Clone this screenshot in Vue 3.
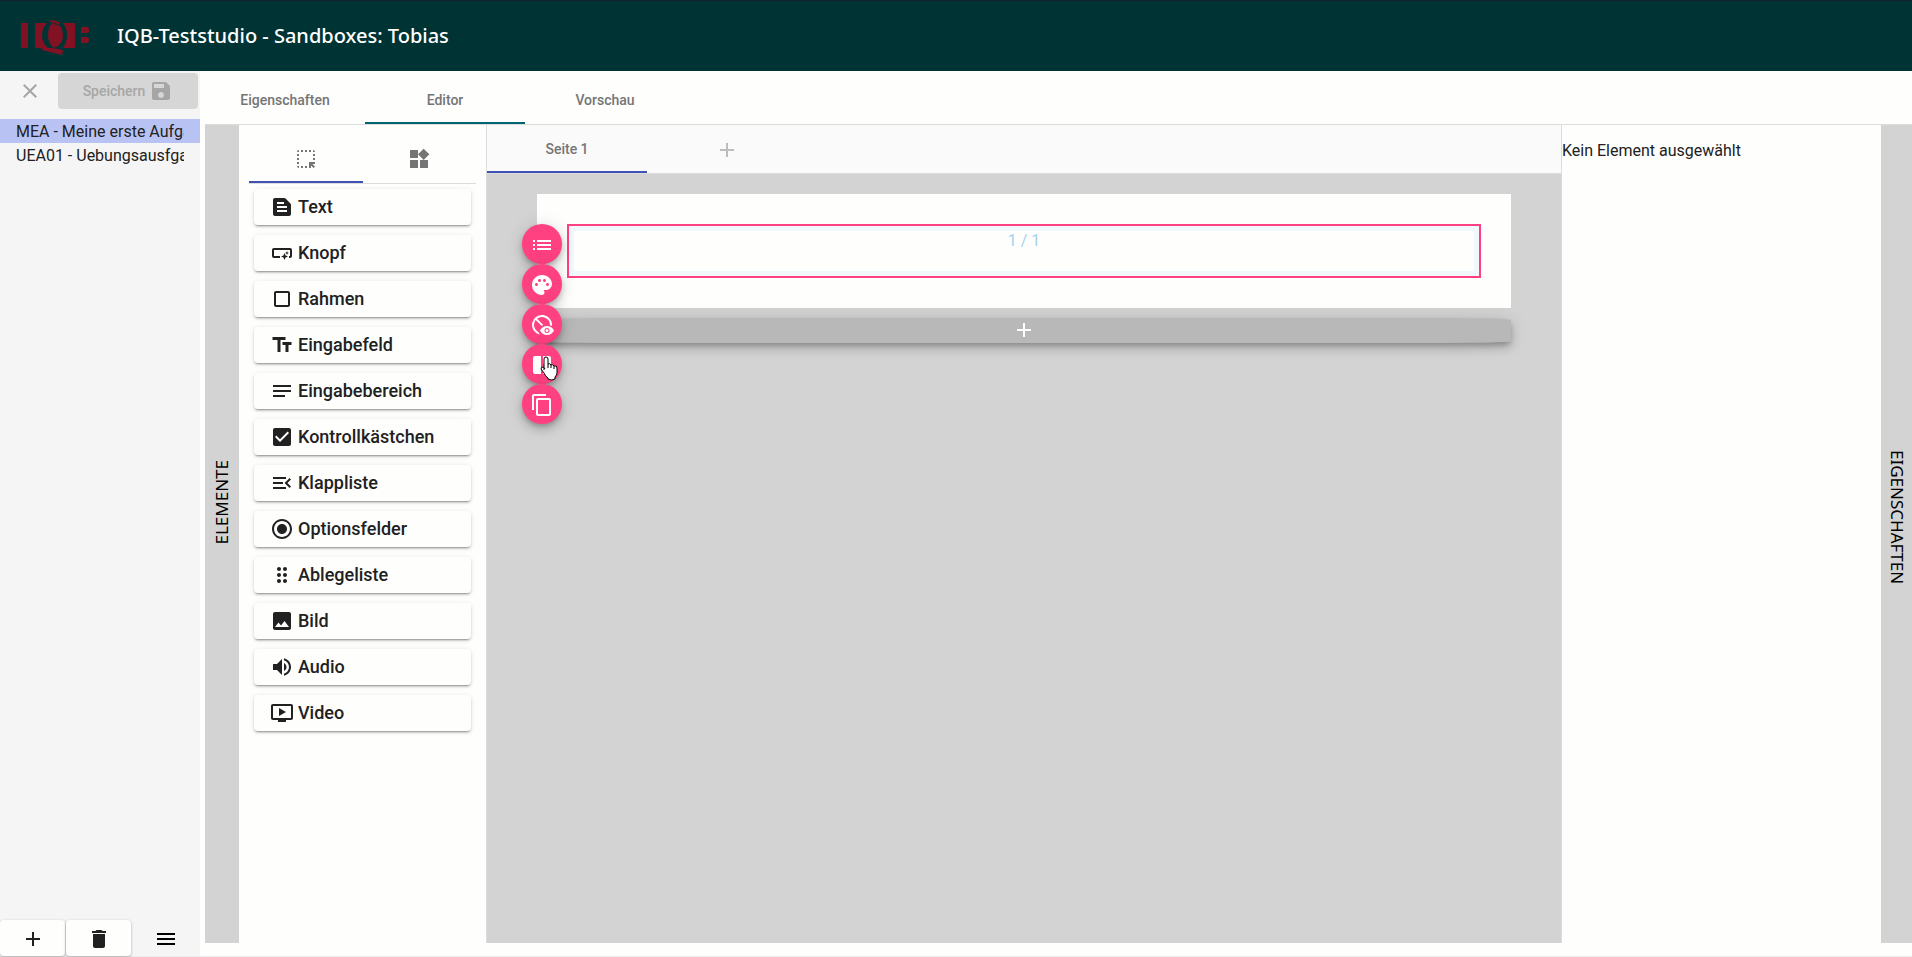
<script setup>
import { ref } from 'vue'

const icons = {
  close: 'M19 6.41L17.59 5 12 10.59 6.41 5 5 6.41 10.59 12 5 17.59 6.41 19 12 13.41 17.59 19 19 17.59 13.41 12z',
  save: 'M17 3H5c-1.11 0-2 .9-2 2v14c0 1.1.89 2 2 2h14c1.1 0 2-.9 2-2V7l-4-4zm-5 16c-1.66 0-3-1.34-3-3s1.34-3 3-3 3 1.34 3 3-1.34 3-3 3zm3-10H5V5h10v4z',
  remove: 'M6 19c0 1.1.9 2 2 2h8c1.1 0 2-.9 2-2V7H6v12zM19 4h-3.5l-1-1h-5l-1 1H5v2h14V4z',
  add: 'M19 13h-6v6h-2v-6H5v-2h6V5h2v6h6v2z',
  menu: 'M3 18h18v-2H3v2zm0-5h18v-2H3v2zm0-7v2h18V6H3z',
  select: 'M17 5h-2V3h2v2zm-2 16h2v-2.59L19.59 21 21 19.59 18.41 17H21v-2h-6v6zm4-12h2V7h-2v2zm0 4h2v-2h-2v2zm-8 8h2v-2h-2v2zM7 5h2V3H7v2zM3 17h2v-2H3v2zm2 4v-2H3c0 1.1.9 2 2 2zM19 3v2h2c0-1.1-.9-2-2-2zm-8 2h2V3h-2v2zM3 9h2V7H3v2zm4 12h2v-2H7v2zm-4-8h2v-2H3v2zm0-8h2V3c-1.1 0-2 .9-2 2z',
  widgets: 'M13 13v8h8v-8h-8zM3 21h8v-8H3v8zM3 3v8h8V3H3zm13.66-1.31L11 7.34 16.66 13l5.66-5.66-5.66-5.65z'
}

const elements = [
  { label: 'Text', d: 'M20.41 8.41l-4.83-4.83C15.21 3.21 14.7 3 14.17 3H5C3.9 3 3 3.9 3 5v14c0 1.1.9 2 2 2h14c1.1 0 2-.9 2-2V9.83C21 9.3 20.79 8.79 20.41 8.41zM7 7h7v2H7V7zM17 17H7v-2h10V17zM17 13H7v-2h10V13z' },
  { label: 'Knopf', d: 'M22 9v6c0 1.1-.9 2-2 2h-1v-2h1V9H4v6h6v2H4c-1.1 0-2-.9-2-2V9c0-1.1.9-2 2-2h16c1.1 0 2 .9 2 2zm-7.5 10l1.09-2.41L18 15.5l-2.41-1.09L14.5 12l-1.09 2.41L11 15.5l2.41 1.09L14.5 19zm2.5-5l.62-1.38L19 12l-1.38-.62L17 10l-.62 1.38L15 12l1.38.62L17 14z' },
  { label: 'Rahmen', d: 'M18 4H6c-1.1 0-2 .9-2 2v12c0 1.1.9 2 2 2h12c1.1 0 2-.9 2-2V6c0-1.1-.9-2-2-2zm0 14H6V6h12v12z' },
  { label: 'Eingabefeld', d: 'M2.5 4v3h5v12h3V7h5V4h-13zm19 5h-9v3h3v7h3v-7h3V9z' },
  { label: 'Eingabebereich', d: 'M3 18h12v-2H3v2zM3 6v2h18V6H3zm0 7h18v-2H3v2z' },
  { label: 'Kontrollkästchen', d: 'M19 3H5c-1.11 0-2 .9-2 2v14c0 1.1.89 2 2 2h14c1.11 0 2-.9 2-2V5c0-1.1-.89-2-2-2zm-9 14l-5-5 1.41-1.41L10 14.17l7.59-7.59L19 8l-9 9z' },
  { label: 'Klappliste', d: 'M3 18h13v-2H3v2zm0-5h10v-2H3v2zm0-7v2h13V6H3zm18 9.59L17.42 12 21 8.41 19.59 7l-5 5 5 5L21 15.59z' },
  { label: 'Optionsfelder', d: 'M12 7c-2.76 0-5 2.24-5 5s2.24 5 5 5 5-2.24 5-5-2.24-5-5-5zm0-5C6.48 2 2 6.48 2 12s4.48 10 10 10 10-4.48 10-10S17.52 2 12 2zm0 18c-4.42 0-8-3.58-8-8s3.58-8 8-8 8 3.58 8 8-3.58 8-8 8z' },
  { label: 'Ablegeliste', d: 'M11 18c0 1.1-.9 2-2 2s-2-.9-2-2 .9-2 2-2 2 .9 2 2zm-2-8c-1.1 0-2 .9-2 2s.9 2 2 2 2-.9 2-2-.9-2-2-2zm0-6c-1.1 0-2 .9-2 2s.9 2 2 2 2-.9 2-2-.9-2-2-2zm6 4c1.1 0 2-.9 2-2s-.9-2-2-2-2 .9-2 2 .9 2 2 2zm0 2c-1.1 0-2 .9-2 2s.9 2 2 2 2-.9 2-2-.9-2-2-2zm0 6c-1.1 0-2 .9-2 2s.9 2 2 2 2-.9 2-2-.9-2-2-2z' },
  { label: 'Bild', d: 'M21 19V5c0-1.1-.9-2-2-2H5c-1.1 0-2 .9-2 2v14c0 1.1.9 2 2 2h14c1.1 0 2-.9 2-2zM8.5 13.5l2.5 3.01L14.5 12l4.5 6H5l3.5-4.5z' },
  { label: 'Audio', d: 'M3 9v6h4l5 5V4L7 9H3zm13.5 3c0-1.77-1.02-3.29-2.5-4.03v8.05c1.48-.73 2.5-2.25 2.5-4.02zM14 3.23v2.06c2.89.86 5 3.54 5 6.71s-2.11 5.85-5 6.71v2.06c4.01-.91 7-4.49 7-8.77s-2.99-7.86-7-8.77z' },
  { label: 'Video', d: 'M21 3H3c-1.11 0-2 .89-2 2v12c0 1.1.89 2 2 2h5v2h8v-2h5c1.1 0 1.99-.9 1.99-2L23 5c0-1.11-.9-2-2-2zm0 14H3V5h18v12zm-5-6l-7 4V7z' }
]

const tools = [
  { label: 'Liste', d: 'M3 13h2v-2H3v2zm0 4h2v-2H3v2zm0-8h2V7H3v2zm4 4h14v-2H7v2zm0 4h14v-2H7v2zM7 7v2h14V7H7z' },
  { label: 'Farbe', d: 'M12 2C6.49 2 2 6.49 2 12s4.49 10 10 10c1.38 0 2.5-1.12 2.5-2.5 0-.61-.23-1.2-.64-1.67-.08-.1-.13-.21-.13-.33 0-.28.22-.5.5-.5H16c3.31 0 6-2.69 6-6 0-4.96-4.49-9-10-9zm5.5 11c-.83 0-1.5-.67-1.5-1.5s.67-1.5 1.5-1.5 1.5.67 1.5 1.5-.67 1.5-1.5 1.5zm-3-4c-.83 0-1.5-.67-1.5-1.5S13.67 6 14.5 6s1.5.67 1.5 1.5S15.33 9 14.5 9zM5 11.5c0-.83.67-1.5 1.5-1.5s1.5.67 1.5 1.5S7.33 13 6.5 13 5 12.33 5 11.5zm6-4c0 .83-.67 1.5-1.5 1.5S8 8.33 8 7.5 8.67 6 9.5 6s1.5.67 1.5 1.5z' },
  { label: 'Sichtbarkeit', d: 'M9.6 21.7A10 10 0 1 1 21.95 13a9.5 9.5 0 0 0-2-.7A8 8 0 0 0 7.1 5.69l6.2 6.2a9 9 0 0 0-1.9.9L5.69 7.1A8 8 0 0 0 8.6 19.24zM17 13c-3.18 0-5.9 1.87-7 4.5 1.1 2.63 3.82 4.5 7 4.5s5.9-1.87 7-4.5c-1.1-2.63-3.82-4.5-7-4.5zm0 7a2.5 2.5 0 1 1 0-5 2.5 2.5 0 0 1 0 5zm0-4a1.5 1.5 0 1 0 0 3 1.5 1.5 0 0 0 0-3z' },
  { label: 'Aufteilung', d: 'M3 5c0-1.1.9-2 2-2h6v18H5c-1.1 0-2-.9-2-2zM13 3h6c1.1 0 2 .9 2 2v14c0 1.1-.9 2-2 2h-6v-7l1-2-1-2z' },
  { label: 'Kopieren', d: 'M16 1H4c-1.1 0-2 .9-2 2v14h2V3h12V1zm3 4H8c-1.1 0-2 .9-2 2v14c0 1.1.9 2 2 2h11c1.1 0 2-.9 2-2V7c0-1.1-.9-2-2-2zm0 16H8V7h11v14z' }
]

const units = ['MEA - Meine erste Aufgabe', 'UEA01 - Uebungsausfgabe']
const tabs = ['Eigenschaften', 'Editor', 'Vorschau']
const activeUnit = ref(0)
const activeTab = ref(1)
</script>

<template>
  <div class="app">
    <header class="header">
      <svg class="logo" viewBox="0 0 70 36" aria-label="IQB">
        <path class="red" d="M1 5h7v25H1zM15 5h12q-5 5-5 12 0 8 6 13H15zM43 5h12v25H43q4-6 4-13 0-7-4-12zM61 9h6q2 0 2 3t-2 3h-6zM61 19h6q2 0 2 3t-2 3h-6z" />
        <path class="red" d="M33 4q-5 4-5 13t6 13q9-3 9-13T33 4zM28 3q6-2 13 2l-5 2q-3-3-8-4zM22 30q9-1 21 2l-1 5-20-5z" />
      </svg>
      <h1 class="title">IQB-Teststudio - Sandboxes: Tobias</h1>
    </header>

    <div class="body">
      <aside class="sidebar">
        <div class="save-row">
          <button class="plain" aria-label="Schließen" disabled>
            <svg class="icon" viewBox="0 0 24 24"><path :d="icons.close" /></svg>
          </button>
          <button class="save" disabled>
            Speichern
            <svg class="icon" viewBox="0 0 24 24"><path :d="icons.save" /></svg>
          </button>
        </div>
        <nav class="units">
          <a v-for="(u, i) in units" :key="u" href="#" class="unit" :class="{ active: i === activeUnit }" @click.prevent="activeUnit = i">
            <span class="unit-name">{{ u }}</span>
          </a>
        </nav>
        <div class="actions">
          <button class="raised" aria-label="Neu"><svg class="icon" viewBox="0 0 24 24"><path :d="icons.add" /></svg></button>
          <button class="raised" aria-label="Löschen"><svg class="icon" viewBox="0 0 24 24"><path :d="icons.remove" /></svg></button>
          <button class="plain more" aria-label="Menü"><svg class="icon" viewBox="0 0 24 24"><path :d="icons.menu" /></svg></button>
        </div>
      </aside>

      <main class="main">
        <nav class="tabs main-tabs">
          <button v-for="(t, i) in tabs" :key="t" class="tab" :class="{ active: i === activeTab }" @click="activeTab = i">{{ t }}</button>
        </nav>

        <div class="workspace">
          <div class="strip left"><span>ELEMENTE</span></div>
          <section class="palette">
            <div class="tabs palette-tabs">
              <button class="tab active" aria-label="Elemente"><svg class="icon" viewBox="0 0 24 24"><path :d="icons.select" /></svg></button>
              <button class="tab" aria-label="Vorlagen"><svg class="icon" viewBox="0 0 24 24"><path :d="icons.widgets" /></svg></button>
            </div>
            <div class="element-list">
              <button v-for="e in elements" :key="e.label" class="element">
                <svg class="icon" viewBox="0 0 24 24"><path :d="e.d" /></svg>
                <span>{{ e.label }}</span>
              </button>
            </div>
          </section>

          <section class="canvas">
            <div class="tabs page-tabs">
              <button class="tab active">Seite 1</button>
              <button class="tab add-page" aria-label="Seite hinzufügen"><svg class="icon" viewBox="0 0 24 24"><path :d="icons.add" /></svg></button>
            </div>
            <div class="stage">
              <div class="page">
                <div class="section">
                  <div class="section-inner">1 / 1</div>
                  <div class="tools">
                    <button v-for="t in tools" :key="t.label" class="fab" :aria-label="t.label">
                      <svg class="icon" viewBox="0 0 24 24"><path fill-rule="evenodd" :d="t.d" /></svg>
                    </button>
                    <svg class="pointer" viewBox="0 0 19 25">
                      <path d="M5 14V3q0-2 2-2t2 2v5q2-1 3 1 2-1 3 1 3-1 3 2v5q0 2-2 4v2q-3 2-7 0v-1q-3-2-4-5l-3-4q0-2 2-2 1 0 2 2" />
                      <path d="M9 8v4M12 9v3M15 10v3" />
                    </svg>
                  </div>
                </div>
              </div>
              <button class="add-section" aria-label="Abschnitt hinzufügen"><svg class="icon" viewBox="0 0 24 24"><path :d="icons.add" /></svg></button>
            </div>
          </section>

          <section class="props">Kein Element ausgewählt</section>
          <div class="strip right"><span>EIGENSCHAFTEN</span></div>
        </div>
      </main>
    </div>
  </div>
</template>

<style>
body {
  margin: 0;
}
</style>

<style scoped>
.app {
  box-sizing: border-box;
  min-height: 100vh;
  display: flex;
  flex-direction: column;
  border-bottom: 1px solid #ececec;
  background: #fefefd;
  color: #212121;
  font: 400 16px/24px Roboto, "Liberation Sans", sans-serif;
}

button {
  margin: 0;
  padding: 0;
  border: 0;
  background: none;
  color: inherit;
  font: inherit;
  cursor: pointer;
}

.icon {
  display: block;
  flex: none;
  width: 24px;
  height: 24px;
  fill: currentColor;
}

.header {
  box-sizing: border-box;
  height: 71px;
  display: flex;
  align-items: center;
  gap: 27px;
  padding-left: 20px;
  border-top: 1px solid #14202a;
  background: #003333;
}

.logo {
  width: 70px;
  height: 36px;
  overflow: visible;
}

.red {
  fill: #821223;
}

.title {
  margin: 0;
  color: #fff;
  font: 500 20px/32px "Noto Sans", sans-serif;
}

.body {
  flex: 1;
  display: flex;
}

.sidebar {
  width: 200px;
  display: flex;
  flex-direction: column;
  background: #f5f5f5;
}

.save-row {
  display: flex;
  justify-content: space-between;
  align-items: center;
  padding: 2px 2px 10px 18px;
  color: #a6a6a6;
}

.save {
  width: 140px;
  height: 36px;
  display: flex;
  align-items: center;
  justify-content: center;
  gap: 4px;
  border-radius: 4px;
  background: #d6d6d6;
  font-size: 14px;
  font-weight: 500;
}

.units {
  flex: 1;
}

.unit {
  display: block;
  padding: 1px 16px 0;
  color: #212121;
  line-height: 23px;
  text-decoration: none;
}

.unit.active {
  background: #b9c3f3;
}

.unit-name {
  display: block;
  overflow: hidden;
  white-space: nowrap;
}

.actions {
  display: flex;
  gap: 1px;
}

.raised {
  box-sizing: border-box;
  width: 65px;
  height: 36px;
  padding-top: 2px;
  display: flex;
  align-items: center;
  justify-content: center;
  border-radius: 4px;
  background: #fefefd;
  box-shadow: 0 1px 3px rgba(0, 0, 0, 0.3);
}

.more {
  flex: 1;
  padding-top: 2px;
  display: flex;
  align-items: center;
  justify-content: center;
  color: #000;
}

.main {
  flex: 1;
  min-width: 0;
  display: flex;
  flex-direction: column;
  padding: 5px 0 13px 5px;
}

.tabs {
  display: flex;
  border-bottom: 1px solid #dcdcdc;
}

.tab {
  box-sizing: border-box;
  width: 160px;
  height: 48px;
  display: flex;
  align-items: center;
  justify-content: center;
  border-bottom: 2px solid transparent;
  padding-top: 2px;
  color: #757575;
  font-size: 14px;
  font-weight: 500;
}

.tab.active {
  border-bottom-color: #3f51b5;
}

.main-tabs .tab.active {
  border-bottom-color: #006472;
}

.workspace {
  flex: 1;
  display: flex;
}

.strip {
  box-sizing: border-box;
  display: flex;
  flex-direction: column;
  align-items: flex-start;
  justify-content: center;
  background: #d3d3d3;
  color: #000;
  font: 400 17px/24px "Noto Sans", sans-serif;
  writing-mode: vertical-rl;
}

.left {
  width: 34px;
  padding-top: 35vh;
}

.right {
  width: 31px;
  padding-top: 34vh;
}

.left span {
  transform: rotate(180deg);
}

.palette {
  box-sizing: border-box;
  width: 247px;
  padding: 10px;
}

.palette-tabs .tab {
  width: 50%;
}

.element-list {
  display: flex;
  flex-direction: column;
  gap: 10px;
  padding: 5px;
}

.element {
  height: 36px;
  display: flex;
  align-items: center;
  gap: 4px;
  padding: 0 16px;
  border-radius: 4px;
  box-shadow: 0 3px 1px -2px rgba(0, 0, 0, 0.2), 0 2px 2px rgba(0, 0, 0, 0.14), 0 1px 5px rgba(0, 0, 0, 0.12);
  font-size: 18px;
  font-weight: 500;
}

.canvas {
  flex: 1;
  display: flex;
  flex-direction: column;
  border: solid #dcdcdc;
  border-width: 0 1px;
  background: #d3d3d3;
}

.page-tabs {
  background: #fafafa;
}

.add-page {
  padding-top: 4px;
  color: #bdbdbd;
}

.stage {
  flex: 1;
  padding: 20px 50px;
}

.page {
  padding: 30px;
  background: #fefefd;
}

.section {
  position: relative;
  border: 2px solid #ff4081;
  padding: 5px;
  background: #f0f8fb;
}

.section-inner {
  height: 40px;
  background: #fefefd;
  color: #a6d3ea;
  line-height: 20px;
  text-align: center;
}

.tools {
  position: absolute;
  top: -2px;
  left: -47px;
  z-index: 1;
}

.fab {
  box-sizing: border-box;
  width: 40px;
  height: 40px;
  padding-top: 2px;
  display: flex;
  align-items: center;
  justify-content: center;
  border-radius: 50%;
  background: #ff4081;
  box-shadow: 0 3px 5px -1px rgba(0, 0, 0, 0.2), 0 6px 10px rgba(0, 0, 0, 0.14), 0 1px 18px rgba(0, 0, 0, 0.12);
  color: #fefefd;
}

.pointer {
  position: absolute;
  top: 132px;
  left: 17px;
  width: 19px;
  height: 25px;
  fill: #fff;
  stroke: #000;
  stroke-linejoin: round;
}

.add-section {
  box-sizing: border-box;
  width: 100%;
  height: 25px;
  margin-top: 10px;
  padding-bottom: 1px;
  display: flex;
  align-items: center;
  justify-content: center;
  border-radius: 66px / 2px;
  background: #b8b8b8;
  box-shadow: 0 3px 5px -1px rgba(0, 0, 0, 0.2), 0 6px 10px rgba(0, 0, 0, 0.14), 0 1px 18px rgba(0, 0, 0, 0.12);
  color: #fff;
}

.props {
  box-sizing: border-box;
  width: 319px;
  padding-top: 14px;
}
</style>
